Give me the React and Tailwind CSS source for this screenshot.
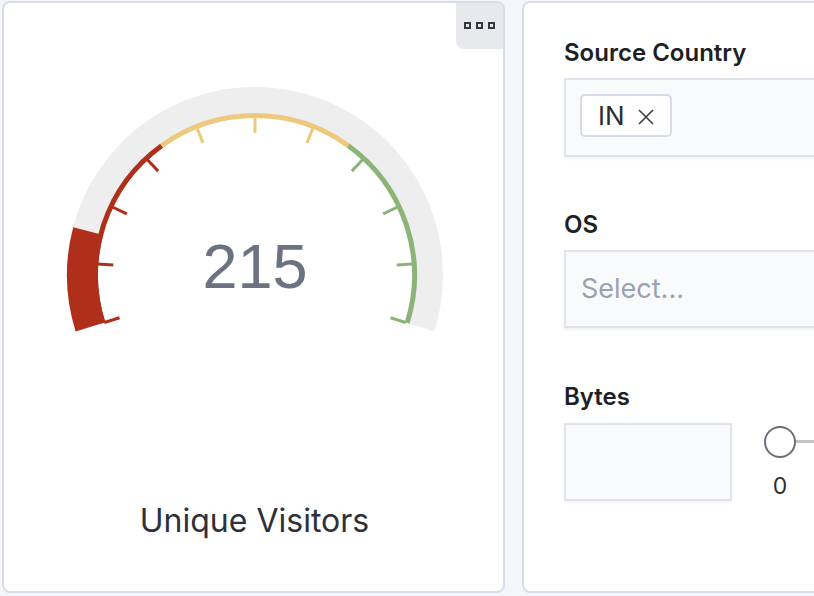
import React from 'react';

const CX = 200;
const CY = 195;
const START = -107.5;
const SPAN = 215;

const polar = (r, deg) => {
  const a = (deg * Math.PI) / 180;
  return [CX + r * Math.sin(a), CY - r * Math.cos(a)];
};

const arc = (r, a1, a2) => {
  const [x1, y1] = polar(r, a1);
  const [x2, y2] = polar(r, a2);
  const large = a2 - a1 > 180 ? 1 : 0;
  return `M ${x1} ${y1} A ${r} ${r} 0 ${large} 1 ${x2} ${y2}`;
};

const RED = '#b02f1a';
const YELLOW = '#edca7b';
const GREEN = '#8cb478';

const Gauge = ({ value, fraction }) => {
  const third = SPAN / 3;
  const ticks = Array.from({ length: 11 }).map((_, i) => START + (SPAN / 10) * i);
  const tickColor = (a) => (a < START + third ? RED : a > START + 2 * third ? GREEN : YELLOW);

  return (
    <svg width="400" height="260" viewBox="0 0 400 260" className="block">
      {/* background band */}
      <path d={arc(172.5, START, START + SPAN)} stroke="#eeeeee" strokeWidth="31" fill="none" />
      {/* value band */}
      <path d={arc(172.5, START, START + SPAN * fraction)} stroke={RED} strokeWidth="31" fill="none" />
      {/* threshold bands */}
      <path d={arc(159.5, START, START + third)} stroke={RED} strokeWidth="5" fill="none" />
      <path d={arc(159.5, START + third, START + 2 * third)} stroke={YELLOW} strokeWidth="5" fill="none" />
      <path d={arc(159.5, START + 2 * third, START + SPAN)} stroke={GREEN} strokeWidth="5" fill="none" />
      {ticks.map((a, i) => {
        const [x1, y1] = polar(158, a);
        const [x2, y2] = polar(142, a);
        return <line key={i} x1={x1} y1={y1} x2={x2} y2={y2} stroke={tickColor(a)} strokeWidth="3" />;
      })}
      <text
        x={CX}
        y="208"
        textAnchor="middle"
        fill="#6b7280"
        fontSize="63"
        fontFamily="'Liberation Sans', Arial, sans-serif"
      >
        {value}
      </text>
    </svg>
  );
};

const Label = ({ children }) => (
  <div className="text-[24px] leading-[32px] font-semibold text-[#1d1f26]">{children}</div>
);

export default function App() {
  return (
    <div
      className="w-[814px] h-[596px] overflow-hidden bg-[#f4f6fa] flex gap-[17px] pl-[2px] pt-[1px]"
      style={{ fontFamily: 'Inter, "Noto Sans", sans-serif' }}
    >
      {/* Gauge card */}
      <div className="relative w-[503px] h-[592px] shrink-0 bg-white border-2 border-[#d8dde9] rounded-[8px] overflow-hidden flex flex-col">
        <div className="absolute top-0 right-0 w-[47px] h-[46px] bg-[#e8e9ec] rounded-bl-[8px] flex items-start justify-center gap-[5px] pt-[19px]">
          <span className="w-[7px] h-[7px] border-2 border-[#34353d]" />
          <span className="w-[7px] h-[7px] border-2 border-[#34353d]" />
          <span className="w-[7px] h-[7px] border-2 border-[#34353d]" />
        </div>
        <div className="ml-[51px] mt-[77px]">
          <Gauge value={215} fraction={0.15} />
        </div>
        <div className="mt-[162px] pl-[2px] text-center text-[32px] leading-[38px] text-[#2e3139]">
          Unique Visitors
        </div>
      </div>

      {/* Filters card */}
      <div className="w-[400px] h-[592px] shrink-0 bg-white border-2 border-[#d8dde9] rounded-[8px] pl-[40px] pt-[34px] flex flex-col">
        <Label>Source Country</Label>
        <div className="mt-[9px] h-[79px] bg-[#f9fafc] border-2 border-[#e0e4ee] shadow-[0_2px_3px_rgba(0,0,0,0.06)] pl-[14px] pt-[14px]">
          <div className="inline-flex items-center h-[43px] w-[92px] bg-white border-2 border-[#d6dbe7] rounded-[5px] pl-[16px] gap-[13px] text-[26px] text-[#2a2d35]">
            <span className="leading-none mt-[1px]">IN</span>
            <svg width="16" height="16" viewBox="0 0 16 16" className="mt-[2px]">
              <path d="M1 1 L15 15 M15 1 L1 15" stroke="#3a3d45" strokeWidth="1.6" />
            </svg>
          </div>
        </div>

        <div className="mt-[52px]">
          <Label>OS</Label>
        </div>
        <div className="mt-[9px] h-[78px] bg-[#f9fafc] border-2 border-[#e0e4ee] shadow-[0_2px_3px_rgba(0,0,0,0.06)] pl-[15px] flex items-center text-[27px] text-[#9aa1b0]">
          Select...
        </div>

        <div className="mt-[53px]">
          <Label>Bytes</Label>
        </div>
        <div className="mt-[10px] flex items-start">
          <div className="w-[168px] h-[78px] bg-[#f9fafc] border-2 border-[#e0e4ee] shadow-[0_2px_3px_rgba(0,0,0,0.06)]" />
          <div className="ml-[32px] flex flex-col items-center w-[32px] pt-[3px]">
            <div className="relative w-[32px] h-[32px]">
              <div className="absolute left-[30px] top-[14px] w-[200px] h-[3px] bg-[#c3c4c9]" />
              <div className="absolute inset-0 rounded-full bg-white border-2 border-[#6b6e78]" />
            </div>
            <div className="mt-[14px] text-[23px] leading-[28px] text-[#2b2e36]">0</div>
          </div>
        </div>
      </div>
    </div>
  );
}
